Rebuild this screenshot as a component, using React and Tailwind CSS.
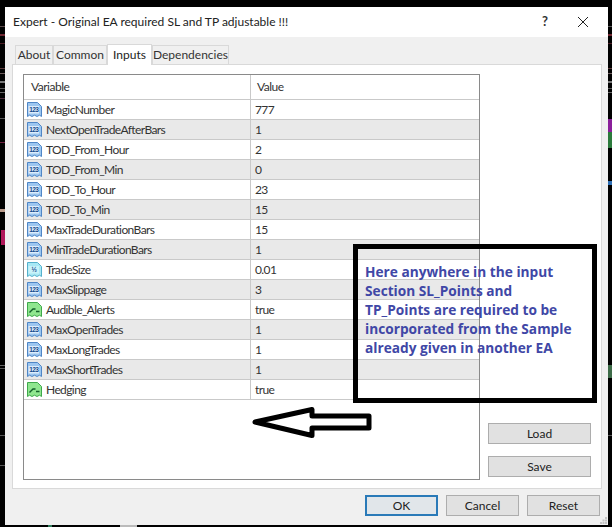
import React from 'react';

const rows = [
  { name: 'MagicNumber', value: '777', type: 'int' },
  { name: 'NextOpenTradeAfterBars', value: '1', type: 'int' },
  { name: 'TOD_From_Hour', value: '2', type: 'int' },
  { name: 'TOD_From_Min', value: '0', type: 'int' },
  { name: 'TOD_To_Hour', value: '23', type: 'int' },
  { name: 'TOD_To_Min', value: '15', type: 'int' },
  { name: 'MaxTradeDurationBars', value: '15', type: 'int' },
  { name: 'MinTradeDurationBars', value: '1', type: 'int' },
  { name: 'TradeSize', value: '0.01', type: 'double' },
  { name: 'MaxSlippage', value: '3', type: 'int' },
  { name: 'Audible_Alerts', value: 'true', type: 'bool' },
  { name: 'MaxOpenTrades', value: '1', type: 'int' },
  { name: 'MaxLongTrades', value: '1', type: 'int' },
  { name: 'MaxShortTrades', value: '1', type: 'int' },
  { name: 'Hedging', value: 'true', type: 'bool' },
];

const tabs = [
  { label: 'About', width: 'w-[38px]' },
  { label: 'Common', width: 'w-[54px]' },
  { label: 'Inputs', width: 'w-[45px]', active: true },
  { label: 'Dependencies', width: 'w-[77px]' },
];

const iconColors = {
  int: { fill: '#9cc6f0', stroke: '#4f86c6', inner: '#dcecfb', text: '123' },
  double: { fill: '#a8e8f5', stroke: '#55b0cc', inner: '#c9f3fa', text: '½' },
  bool: { fill: '#8fe68f', stroke: '#3fa84c' },
};

// bits of the chart window showing behind the dialog: [left, top, width, height, colour]
const chartBits = [
  [0, 26, 5, 1, '#5a4a4a'], [0, 34, 5, 2, '#6e2630'], [0, 43, 5, 1, '#4a1c24'],
  [0, 68, 5, 1, '#5a3a3a'], [0, 73, 5, 1, '#6a5a5a'], [0, 81, 5, 2, '#777777'],
  [0, 88, 5, 1, '#555555'], [0, 92, 5, 1, '#666666'], [0, 98, 5, 1, '#4a2a3a'],
  [0, 118, 5, 1, '#555555'], [0, 142, 5, 1, '#6e2040'], [0, 209, 5, 3, '#b89a8a'],
  [1, 230, 4, 15, '#b0185a'], [0, 365, 5, 1, '#666666'], [0, 368, 5, 1, '#555555'],
  [0, 435, 5, 1, '#555555'], [0, 465, 5, 1, '#555555'],
  [608, 26, 4, 1, '#555555'], [608, 34, 4, 2, '#6e2630'], [608, 43, 4, 1, '#4a1c24'],
  [608, 68, 4, 1, '#5a3a3a'], [608, 73, 4, 1, '#6a5a5a'], [608, 81, 4, 2, '#777777'],
  [608, 88, 4, 1, '#555555'], [608, 92, 4, 1, '#666666'], [608, 119, 4, 13, '#8a1f9a'],
  [608, 132, 4, 16, '#2c7a3c'], [608, 181, 4, 4, '#2f6fb5'], [608, 365, 4, 13, '#3d6b48'],
  [608, 435, 4, 1, '#555555'], [120, 525, 17, 2, '#bbbbbb'], [48, 525, 4, 2, '#2f7a5a'],
];

const TypeIcon = ({ type }) => {
  const c = iconColors[type];
  return (
    <svg width="17" height="17" viewBox="0 0 17 17" className="shrink-0">
      <path
        d="M1.5 1.5H11.500L15.500 5.500V15.500L13.500 14.200L11 15.500L8.500 14.200L6 15.500L3.500 14.200L1.500 15.500Z"
        fill={c.fill}
        stroke={c.stroke}
      />
      {type === 'bool' ? (
        <path d="M3.500 11.500L7 8H9.500M10 10.500H13.500" fill="none" stroke="#12602a" strokeWidth="1.4" />
      ) : (
        <>
          <rect x="2.500" y="5" width="10.500" height="7.500" fill={c.inner} />
          <text x="7.800" y="11.300" textAnchor="middle" fontSize="6.500" fontWeight="700" fontFamily="Liberation Sans, sans-serif" fill="#16488c">
            {c.text}
          </text>
        </>
      )}
    </svg>
  );
};

const Button = ({ children, className = '' }) => (
  <button className={`flex items-center justify-center text-[12px] text-[#222] ${className}`}>
    {children}
  </button>
);

const Arrow = () => (
  <svg width="124" height="36" viewBox="0 0 124 36" className="absolute left-[250px] top-[405px]">
    <path
      d="M5 17L62 4.500V11H119V23H62V30.500Z"
      fill="white"
      stroke="black"
      strokeWidth="5"
      strokeLinejoin="round"
    />
  </svg>
);

export default function App() {
  return (
    <div className="relative w-[612px] h-[527px] bg-black overflow-hidden font-['Lato',sans-serif]">
      {chartBits.map(([left, top, width, height, color], i) => (
        <div key={i} className="absolute" style={{ left, top, width, height, background: color }} />
      ))}

      <div className="relative pt-[7px] pl-[5px]">
        <div className="relative flex flex-col w-[603px] h-[518px] bg-[#f0f0f0]">
          <div className="flex items-center justify-between h-[30px] bg-white pl-[8px] pr-[19px] text-[12px] text-[#222]">
            <span>Expert - Original EA required SL and TP adjustable !!!</span>
            <div className="flex items-center gap-[29px]">
              <span className="text-[13px] font-bold text-[#333]">?</span>
              <svg width="12" height="12" viewBox="0 0 12 12">
                <path d="M1 1L11 11M11 1L1 11" stroke="#222" strokeWidth="1" />
              </svg>
            </div>
          </div>

          <div className="flex items-end h-[27px] pl-[10px]">
            {tabs.map((tab) => (
              <div
                key={tab.label}
                className={`flex items-center justify-center border border-b-0 border-[#d9d9d9] text-[12px] ${tab.width} ${
                  tab.active ? 'h-[21px] -mb-px z-10 bg-white text-[#222]' : 'h-[19px] bg-[#f0f0f0] text-[#333]'
                }`}
              >
                {tab.label}
              </div>
            ))}
          </div>

          <div className="flex ml-[7px] w-[590px] h-[425px] bg-white border border-[#d9d9d9] pt-[9px] pl-[10px]">
            <div className="w-[457px] h-[406px] border border-[#8a8a8a]">
              <div className="flex items-center h-[25px] border-b border-[#c9c9c9] text-[12px] tracking-[-0.5px] text-[#333]">
                <span className="w-[227px] pl-[7px] border-r border-[#c9c9c9] leading-[24px]">Variable</span>
                <span className="pl-[6px]">Value</span>
              </div>
              {rows.map((row, i) => (
                <div
                  key={row.name}
                  className={`flex items-center h-[20px] border-b border-[#c9c9c9] text-[12px] tracking-[-0.6px] text-[#333] ${
                    i % 2 === 1 ? 'bg-[#e9e9e9]' : ''
                  }`}
                >
                  <div className="flex items-center gap-[3px] w-[227px] h-full pl-[2px] border-r border-[#c9c9c9]">
                    <TypeIcon type={row.type} />
                    <span>{row.name}</span>
                  </div>
                  <span className="pl-[4px]">{row.value}</span>
                </div>
              ))}
            </div>
            <div className="flex flex-col gap-[12px] ml-[8px] pt-[349px]">
              <Button className="w-[103px] h-[21px] bg-[#e1e1e1] border border-[#adadad]">Load</Button>
              <Button className="w-[103px] h-[21px] bg-[#e1e1e1] border border-[#adadad]">Save</Button>
            </div>
          </div>

          <div className="flex justify-end gap-[8px] mt-[6px] pr-[8px]">
            <Button className="w-[73px] h-[21px] bg-[#e1e6ea] border-2 border-[#2a7ab8]">OK</Button>
            <Button className="w-[73px] h-[21px] bg-[#e1e1e1] border border-[#adadad]">Cancel</Button>
            <Button className="w-[73px] h-[21px] bg-[#e1e1e1] border border-[#adadad]">Reset</Button>
          </div>

          <svg width="7" height="7" viewBox="0 0 7 7" className="absolute right-[1px] bottom-[1px]">
            <path d="M5 0h2v2h-2zM2.500 2.500h2v2h-2zM5 2.500h2v2h-2zM0 5h2v2h-2zM2.500 5h2v2h-2zM5 5h2v2h-2z" fill="#c4c4c4" />
          </svg>
        </div>
      </div>

      <Arrow />

      <div className="absolute left-[353px] top-[244px] w-[244px] h-[159px] border-[5px] border-black pl-[7px] pt-[13px] text-[13.7px] leading-[19px] font-bold text-[#4047a6] font-['Open_Sans',sans-serif]">
        Here anywhere in the input<br />
        Section SL_Points and<br />
        TP_Points are required to be<br />
        incorporated from the Sample<br />
        already given in another EA
      </div>
    </div>
  );
}
